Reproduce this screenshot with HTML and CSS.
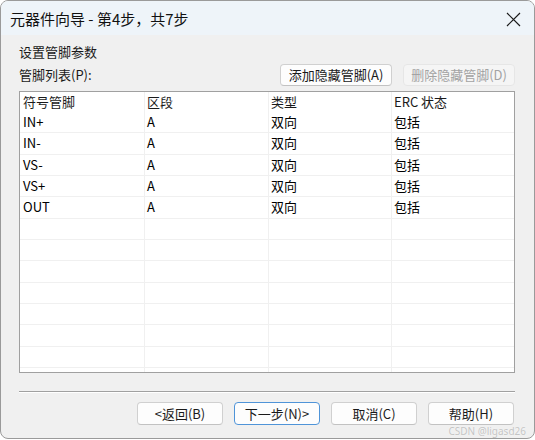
FILE: index.html
```html
<!DOCTYPE html>
<html lang="zh-CN">
<head>
<meta charset="utf-8">
<title>元器件向导</title>
<link rel="stylesheet" href="styles.css">
</head>
<body>
<div class="window">
  <div class="titlebar">
    <span class="title">元器件向导 - 第4步，共7步</span>
    <svg class="close" width="15" height="15" viewBox="0 0 15 15"><path d="M1 1 L14 14 M14 1 L1 14" stroke="#1b1b1b" stroke-width="1.2" fill="none"/></svg>
  </div>
  <div class="content">
    <div class="label">设置管脚参数</div>
    <div class="toolbar">
      <span class="label">管脚列表(P):</span>
      <div class="spacer"></div>
      <button class="btn">添加隐藏管脚(A)</button>
      <button class="btn" disabled>删除隐藏管脚(D)</button>
    </div>
    <div class="table">
      <div class="row head"><div class="cell">符号管脚</div><div class="cell">区段</div><div class="cell">类型</div><div class="cell">ERC 状态</div></div>
      <div class="row"><div class="cell">IN+</div><div class="cell">A</div><div class="cell">双向</div><div class="cell">包括</div></div>
      <div class="row"><div class="cell">IN-</div><div class="cell">A</div><div class="cell">双向</div><div class="cell">包括</div></div>
      <div class="row"><div class="cell">VS-</div><div class="cell">A</div><div class="cell">双向</div><div class="cell">包括</div></div>
      <div class="row"><div class="cell">VS+</div><div class="cell">A</div><div class="cell">双向</div><div class="cell">包括</div></div>
      <div class="row"><div class="cell">OUT</div><div class="cell">A</div><div class="cell">双向</div><div class="cell">包括</div></div>
      <div class="row"><div class="cell"></div><div class="cell"></div><div class="cell"></div><div class="cell"></div></div>
      <div class="row"><div class="cell"></div><div class="cell"></div><div class="cell"></div><div class="cell"></div></div>
      <div class="row"><div class="cell"></div><div class="cell"></div><div class="cell"></div><div class="cell"></div></div>
      <div class="row"><div class="cell"></div><div class="cell"></div><div class="cell"></div><div class="cell"></div></div>
      <div class="row"><div class="cell"></div><div class="cell"></div><div class="cell"></div><div class="cell"></div></div>
      <div class="row"><div class="cell"></div><div class="cell"></div><div class="cell"></div><div class="cell"></div></div>
      <div class="row"><div class="cell"></div><div class="cell"></div><div class="cell"></div><div class="cell"></div></div>
      <div class="row"><div class="cell"></div><div class="cell"></div><div class="cell"></div><div class="cell"></div></div>
    </div>
    <div class="sep"></div>
    <div class="footer">
      <button class="btn wide">&lt;返回(B)</button>
      <button class="btn wide default">下一步(N)&gt;</button>
      <button class="btn wide">取消(C)</button>
      <button class="btn wide">帮助(H)</button>
    </div>
  </div>
  <div class="watermark">CSDN @ligasd26</div>
</div>
</body>
</html>
```

FILE: styles.css
```css
* { box-sizing: border-box; }
html, body { margin: 0; padding: 0; background: #ffffff; }
body {
  font-family: "Noto Sans CJK SC", "Noto Sans", sans-serif;
  font-size: 13px;
  color: #000;
}
.window {
  position: relative;
  width: 535px;
  height: 439px;
  border: 1px solid #9a9a9a;
  border-radius: 8px;
  overflow: hidden;
  background: #f0f0f0;
}
.titlebar {
  height: 34px;
  background: #eef4f9;
  display: flex;
  align-items: center;
  padding: 2px 12px 0 9px;
}
.title {
  font-size: 15px;
  line-height: 20px;
  color: #111111;
  flex: 1;
}
.close { display: block; margin-right: 1px; }
.content {
  padding: 7px 19px 0 18px;
}
.label { line-height: 20px; height: 20px; color: #1a1a1a; }
.toolbar {
  display: flex;
  align-items: center;
  height: 23px;
  margin-top: 1px;
  gap: 11px;
}
.spacer { flex: 1; }
.btn {
  font-family: inherit;
  font-size: 13px;
  line-height: 18px;
  height: 22px;
  padding: 0 8px;
  background: #fdfdfd;
  border: 1px solid #d0d0d0;
  border-bottom-color: #c2c2c2;
  border-radius: 4px;
  color: #1a1a1a;
}
.toolbar .btn { width: 112px; padding: 0; }
.btn:disabled {
  background: #f5f5f5;
  border-color: #e6e6e6;
  color: #a3a3a3;
}
.table {
  margin-top: 5px;
  height: 282px;
  border: 1px solid #a0a0a0;
  background: #ffffff;
  overflow: hidden;
}
.row {
  display: grid;
  grid-template-columns: 125px 124px 123px 1fr;
  height: 21.33px;
  border-bottom: 1px solid #f0f0f0;
}
.row.head {
  height: 20px;
  border-bottom: none;
}
.cell {
  border-right: 1px solid #f0f0f0;
  padding-left: 2px;
  line-height: 20px;
  white-space: nowrap;
  color: #000;
}
.cell:first-child { padding-left: 3px; }
.cell:last-child { border-right: none; }
.head .cell { color: #1a1a1a; line-height: 20px; }
.sep {
  margin-top: 18px;
  height: 2px;
  border-top: 1px solid #a0a0a0;
  border-bottom: 1px solid #ffffff;
}
.footer {
  margin-top: 9px;
  display: flex;
  justify-content: flex-end;
  gap: 11px;
  padding-right: 1px;
}
.btn.wide { width: 86px; height: 23px; padding: 0; }
.btn.default { border-color: #4f94d8; }
.watermark {
  position: absolute;
  right: 8px;
  bottom: 1px;
  font-family: "Noto Sans", sans-serif;
  font-size: 10px;
  line-height: 11px;
  color: #c4c4c4;
  text-shadow: 0 0 1px #ffffff;
}
```
